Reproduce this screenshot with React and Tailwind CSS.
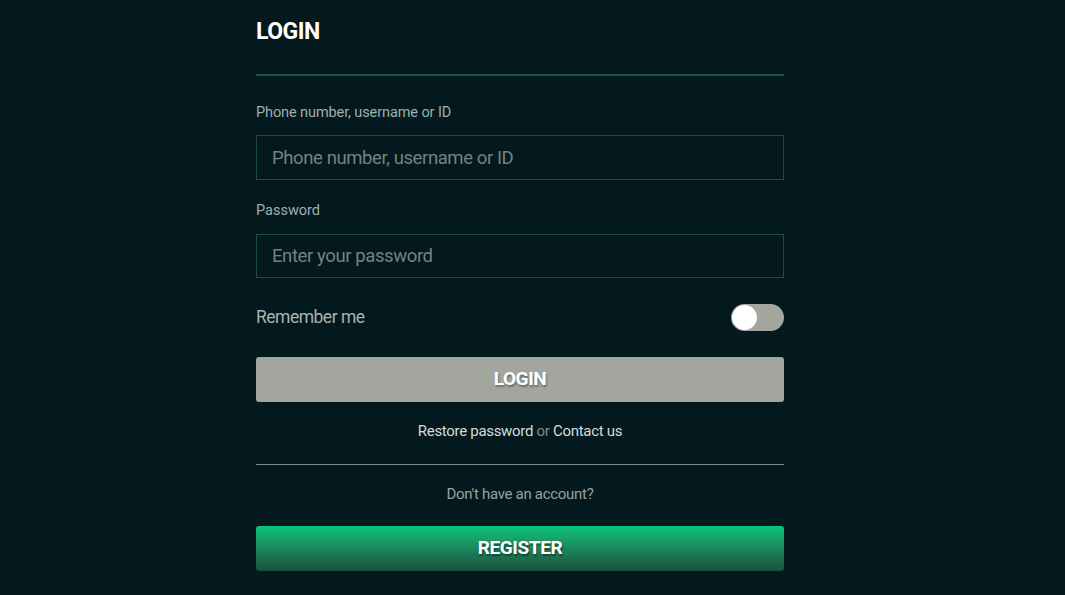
export default function App() {

    return (

        <div className="min-h-screen w-full bg-[#03191e] flex justify-center pr-[25px]" style={{ fontFamily: "Roboto, 'Liberation Sans', sans-serif" }}>

            <div className="w-[528px] flex flex-col">

                {/* HEADER */}

                <h1 className="text-white font-bold text-[23px] leading-none pt-[20px] pb-[22px] tracking-[-0.5px]">LOGIN</h1>

                <div className="h-[2px] bg-[#1b4f47] mt-[9px]"></div>

                {/* FIELDS */}

                <label className="text-[#9fb0ae] text-[14.5px] leading-[14px] mt-[30px] tracking-[-0.1px]">Phone number, username or ID</label>

                <input
                    className="mt-[15px] h-[45px] w-full bg-transparent border border-[#1c4a45] px-[15px] text-[18.5px] tracking-[-0.4px] text-white placeholder:text-[#6f8583] outline-none"
                    placeholder="Phone number, username or ID"
                />

                <label className="text-[#9fb0ae] text-[14.5px] leading-[14px] mt-[24px]">Password</label>

                <input
                    type="password"
                    className="mt-[16px] h-[44px] w-full bg-transparent border border-[#1c4a45] px-[15px] text-[18.5px] tracking-[-0.4px] text-white placeholder:text-[#6f8583] outline-none"
                    placeholder="Enter your password"
                />

                {/* REMEMBER */}

                <div className="flex items-center justify-between mt-[26px]">

                    <span className="text-[#a6b3b1] text-[17.5px] tracking-[-0.5px]">Remember me</span>

                    <div className="w-[53px] h-[27px] rounded-full bg-[#a3a59f] flex items-center px-[1px]">

                        <div className="w-[25px] h-[25px] rounded-full bg-white"></div>

                    </div>

                </div>

                <button className="mt-[26px] h-[45px] w-full rounded-[3px] bg-[#a3a59f] text-white font-bold text-[19px] tracking-[-0.4px] [text-shadow:1px_2px_2px_rgba(0,0,0,0.35)]">
                    LOGIN
                </button>

                <p className="text-center text-[15px] mt-[22px] leading-none tracking-[-0.3px]">

                    <span className="text-[#d3ddda]">Restore password</span>
                    <span className="text-[#7d8d8b]"> or </span>
                    <span className="text-[#d3ddda]">Contact us</span>

                </p>

                <div className="h-px bg-[#7f908f] mt-[25px]"></div>

                <p className="text-center text-[#95a3a2] text-[15px] leading-none mt-[22px] tracking-[-0.3px]">Don't have an account?</p>

                <button className="mt-[24px] h-[45px] w-full rounded-[3px] bg-gradient-to-b from-[#07c57b] to-[#1a4f3e] text-white font-bold text-[19px] tracking-[-0.4px] [text-shadow:1px_2px_2px_rgba(0,0,0,0.45)]">
                    REGISTER
                </button>

            </div>

        </div>

    );

}
